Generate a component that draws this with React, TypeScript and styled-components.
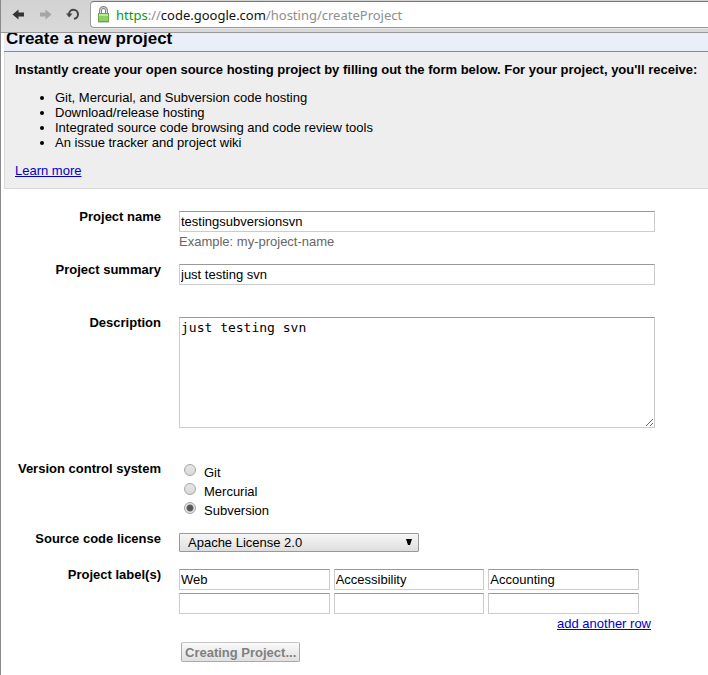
import React, { useState } from "react";
import styled, { createGlobalStyle } from "styled-components";

const GlobalStyle = createGlobalStyle`
  * { box-sizing: border-box; }
  body {
    margin: 0;
    background: #fff;
    color: #000;
    font: 13px/15px "Liberation Sans", Arial, sans-serif;
  }
`;

const Window = styled.div`
  min-height: 100vh;
  border-left: 1px solid #8a8a8a;
  overflow: hidden;
`;

const Toolbar = styled.nav`
  position: relative;
  z-index: 1;
  display: flex;
  align-items: center;
  height: 33px;
  padding: 0 0 4px 8px;
  background: linear-gradient(#d2d2d2, #d9d9d9);
  border-bottom: 1px solid #999;
`;

const NavButton = styled.button`
  display: flex;
  align-items: center;
  justify-content: center;
  width: 27px;
  height: 24px;
  padding: 0 8px 0 0;
  border: 0;
  background: none;
`;

const AddressBar = styled.div`
  display: flex;
  flex: 1;
  align-items: center;
  gap: 6px;
  height: 27px;
  margin-top: 1px;
  padding-left: 6px;
  background: #fff;
  border: 1px solid #999;
  border-top-color: #777;
  border-right: 0;
  border-radius: 4px 0 0 4px;
  box-shadow: 0 1px 0 #e8e8e8;
`;

const Url = styled.span`
  color: #8e8e8e;
  font: 13px/20px "Noto Sans", sans-serif;
  white-space: nowrap;
`;

const Scheme = styled.span`
  color: #0a9a0a;
`;

const Host = styled.span`
  color: #111;
`;

const Page = styled.main`
  padding-left: 3px;
`;

const Title = styled.h1`
  margin: 0;
  padding: 0 2px 6px;
  background: #e9eef9;
  border-bottom: 1px solid #6b8ccf;
  font-size: 17px;
  line-height: 12px;
`;

const Intro = styled.section`
  padding: 10px 0 10px 10px;
  background: #eee;
  border: solid #d8d8d8;
  border-width: 0 0 1px 1px;
`;

const Lead = styled.p`
  margin: 0;
  font-weight: bold;
`;

const Features = styled.ul`
  margin: 13px 0;
  padding-left: 40px;
`;

const Link = styled.a`
  color: #0000cc;
`;

const Form = styled.form`
  padding-top: 20px;
`;

const Row = styled.div<{ $gap?: number }>`
  display: grid;
  grid-template-columns: 157px minmax(0, 476px);
  column-gap: 18px;
  margin-bottom: ${(p) => p.$gap ?? 13}px;
`;

const Label = styled.label`
  font-weight: bold;
  text-align: right;
`;

const Field = styled.div`
  padding-top: 2px;
`;

const TextInput = styled.input`
  display: block;
  width: 100%;
  height: 21px;
  padding: 1px;
  background: #fff;
  border: 1px solid #ccc;
  border-top-color: #999;
  border-radius: 0;
  color: #000;
  font: inherit;
`;

const TextArea = styled.textarea`
  display: block;
  width: 100%;
  height: 111px;
  padding: 2px 1px;
  border: 1px solid #ccc;
  border-top-color: #999;
  font: 13px/15px "DejaVu Sans Mono", monospace;
`;

const Hint = styled.div`
  min-height: 15px;
  margin-top: 2px;
  color: #666;
`;

const RadioLabel = styled.label`
  display: flex;
  gap: 8px;
  height: 19px;
  padding-left: 5px;
  line-height: 19px;
`;

const Radio = styled.input`
  appearance: none;
  width: 12px;
  height: 12px;
  margin: 1px 0 0;
  background: linear-gradient(#e6e6e6, #d9d9d9);
  border: 1px solid #a6a6a6;
  border-radius: 50%;
  &:checked {
    background: radial-gradient(circle, #555 2px, #666 3px, #e4e4e4 4px);
  }
`;

const SelectBox = styled.div`
  position: relative;
  width: 240px;
  max-width: 100%;
`;

const Select = styled.select`
  appearance: none;
  display: block;
  width: 100%;
  height: 19px;
  padding: 0 24px 0 8px;
  background: linear-gradient(#f6f6f6, #dedede);
  border: 1px solid #999;
  border-radius: 1px;
  color: #000;
  font: inherit;
`;

const SelectArrow = styled.svg`
  position: absolute;
  top: 6px;
  right: 7px;
  pointer-events: none;
`;

const LabelGrid = styled.div`
  display: grid;
  grid-template-columns: repeat(3, 1fr);
  gap: 3px 4px;
  max-width: 460px;
`;

const AddRow = styled.div`
  margin-top: 2px;
  padding-right: 4px;
  text-align: right;
`;

const SubmitButton = styled.button`
  display: block;
  height: 20px;
  margin-left: 2px;
  padding: 0 3px;
  background: linear-gradient(#fafafa, #e0e0e0);
  border: 1px solid #aaa;
  border-top-color: #c4c4c4;
  border-radius: 2px;
  color: #808080;
  font: bold 13px/15px "Liberation Sans", Arial, sans-serif;
  white-space: nowrap;
`;

const ArrowIcon = ({ color, flip }: { color: string; flip?: boolean }) => (
  <svg width="13" height="11" viewBox="0 0 13 11" aria-hidden="true">
    <path
      d={flip ? "M12.5 5.5 6.5.5V3.5H1V7.5H6.5V10.5Z" : "M.5 5.5 6.5.5V3.5H12V7.5H6.5V10.5Z"}
      fill={color}
    />
  </svg>
);

const ReloadIcon = () => (
  <svg width="14" height="13" viewBox="0 0 14 13" aria-hidden="true">
    <path d="M3 6.5V6A4.5 4.5 0 1 1 8 10.8" fill="none" stroke="#444" strokeWidth="2" />
    <path d="M0 5.5H6.5L3.2 9.5Z" fill="#444" />
  </svg>
);

const LockIcon = () => (
  <svg width="13" height="17" viewBox="0 0 13 17" aria-label="Secure" role="img">
    <path d="M3.5 8V4.5A3 3 0 0 1 9.5 4.5V8" fill="none" stroke="#858585" strokeWidth="3" />
    <path d="M3.5 8V4.5A3 3 0 0 1 9.5 4.5V8" fill="none" stroke="#e0e0e0" strokeWidth="1" />
    <rect x="1.5" y="7.5" width="10" height="8" fill="#8ed162" stroke="#6aa84a" />
    <path d="M2 8.5H11M2 9.5H11" stroke="#b9e89a" />
    <path d="M1 16.5H12" stroke="#ccc" />
  </svg>
);

const features = [
  "Git, Mercurial, and Subversion code hosting",
  "Download/release hosting",
  "Integrated source code browsing and code review tools",
  "An issue tracker and project wiki",
];

const systems = ["Git", "Mercurial", "Subversion"];

export default function App() {
  const [system, setSystem] = useState("Subversion");
  const [labels, setLabels] = useState(["Web", "Accessibility", "Accounting", "", "", ""]);

  return (
    <>
      <GlobalStyle />
      <Window>
        <Toolbar aria-label="Browser">
          <NavButton aria-label="Back"><ArrowIcon color="#333" /></NavButton>
          <NavButton aria-label="Forward"><ArrowIcon color="#a5a5a5" flip /></NavButton>
          <NavButton aria-label="Reload"><ReloadIcon /></NavButton>
          <AddressBar>
            <LockIcon />
            <Url><Scheme>https</Scheme>://<Host>code.google.com</Host>/hosting/createProject</Url>
          </AddressBar>
        </Toolbar>
        <Page>
          <Title>Create a new project</Title>
          <Intro>
            <Lead>
              Instantly create your open source hosting project by filling out the form below. For
              your project, you'll receive:
            </Lead>
            <Features>
              {features.map((f) => <li key={f}>{f}</li>)}
            </Features>
            <Link href="#learn">Learn more</Link>
          </Intro>
          <Form onSubmit={(e) => e.preventDefault()}>
            <Row>
              <Label htmlFor="name">Project name</Label>
              <Field>
                <TextInput id="name" defaultValue="testingsubversionsvn" />
                <Hint>Example: my-project-name</Hint>
              </Field>
            </Row>
            <Row>
              <Label htmlFor="summary">Project summary</Label>
              <Field>
                <TextInput id="summary" defaultValue="just testing svn" />
                <Hint />
              </Field>
            </Row>
            <Row $gap={16}>
              <Label htmlFor="description">Description</Label>
              <Field>
                <TextArea id="description" spellCheck={false} defaultValue="just testing svn" />
                <Hint />
              </Field>
            </Row>
            <Row $gap={11} role="radiogroup" aria-labelledby="vcs">
              <Label as="div" id="vcs">Version control system</Label>
              <Field>
                {systems.map((s) => (
                  <RadioLabel key={s}>
                    <Radio type="radio" name="vcs" checked={system === s} onChange={() => setSystem(s)} />
                    {s}
                  </RadioLabel>
                ))}
              </Field>
            </Row>
            <Row $gap={15}>
              <Label htmlFor="license">Source code license</Label>
              <Field>
                <SelectBox>
                  <Select id="license">
                    <option>Apache License 2.0</option>
                  </Select>
                  <SelectArrow width="6" height="6" viewBox="0 0 6 6" aria-hidden="true">
                    <path d="M0 0H6L4 6H2Z" />
                  </SelectArrow>
                </SelectBox>
              </Field>
            </Row>
            <Row $gap={11}>
              <Label htmlFor="label-0">Project label(s)</Label>
              <Field>
                <LabelGrid>
                  {labels.map((value, i) => (
                    <TextInput
                      key={i}
                      id={`label-${i}`}
                      aria-label={`Project label ${i + 1}`}
                      value={value}
                      onChange={(e) => setLabels(labels.map((l, j) => (j === i ? e.target.value : l)))}
                    />
                  ))}
                </LabelGrid>
                <AddRow>
                  <Link
                    href="#add"
                    onClick={(e) => {
                      e.preventDefault();
                      setLabels([...labels, "", "", ""]);
                    }}
                  >
                    add another row
                  </Link>
                </AddRow>
              </Field>
            </Row>
            <Row>
              <span />
              <div>
                <SubmitButton type="submit" disabled>Creating Project...</SubmitButton>
              </div>
            </Row>
          </Form>
        </Page>
      </Window>
    </>
  );
}
